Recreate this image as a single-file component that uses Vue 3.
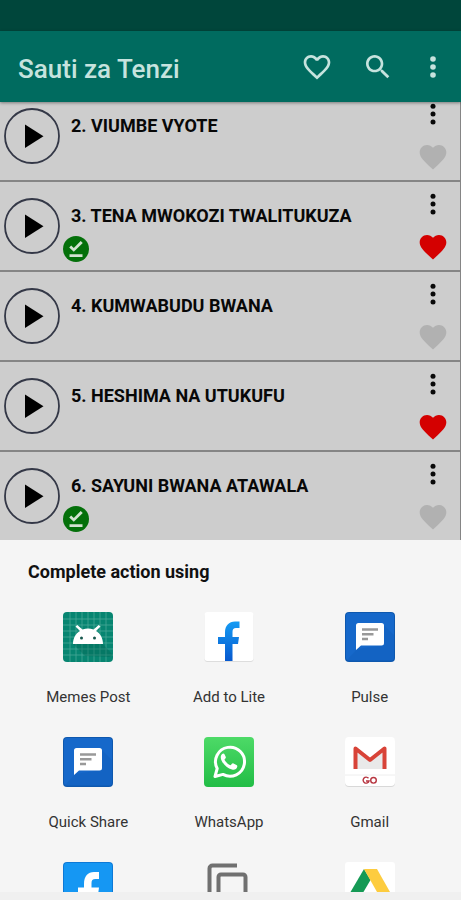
<script setup>
import { ref } from 'vue'

const songs = ref([
  { id: 2, title: '2. VIUMBE VYOTE', saved: false, liked: false },
  { id: 3, title: '3. TENA MWOKOZI TWALITUKUZA', saved: true, liked: true },
  { id: 4, title: '4. KUMWABUDU BWANA', saved: false, liked: false },
  { id: 5, title: '5. HESHIMA NA UTUKUFU', saved: false, liked: true },
  { id: 6, title: '6. SAYUNI BWANA ATAWALA', saved: true, liked: false }
])

const apps = [
  { icon: 'android', name: 'Memes Post' },
  { icon: 'lite', name: 'Add to Lite' },
  { icon: 'message', name: 'Pulse' },
  { icon: 'message', name: 'Quick Share' },
  { icon: 'whatsapp', name: 'WhatsApp' },
  { icon: 'gmail', name: 'Gmail' },
  { icon: 'facebook', name: '' },
  { icon: 'copy', name: '' },
  { icon: 'drive', name: '' }
]
</script>

<template>
  <div class="screen">
    <div class="status"></div>
    <header class="toolbar">
      <h1>Sauti za Tenzi</h1>
      <button class="tool favourites" aria-label="Favourites">
        <svg viewBox="0 0 24 24"><path d="M16.5 3c-1.74 0-3.41.81-4.5 2.09C10.91 3.81 9.24 3 7.5 3 4.42 3 2 5.42 2 8.5c0 3.78 3.4 6.86 8.55 11.54L12 21.35l1.45-1.32C18.6 15.36 22 12.28 22 8.5 22 5.42 19.58 3 16.5 3zm-4.4 15.55l-.1.1-.1-.1C7.14 14.24 4 11.39 4 8.5 4 6.5 5.5 5 7.5 5c1.54 0 3.04.99 3.57 2.36h1.87C13.46 5.99 14.96 5 16.5 5c2 0 3.5 1.5 3.5 3.5 0 2.89-3.14 5.74-7.9 10.05z" /></svg>
      </button>
      <button class="tool" aria-label="Search">
        <svg viewBox="0 0 24 24"><path d="M15.5 14h-.79l-.28-.27C15.41 12.59 16 11.11 16 9.5 16 5.91 13.09 3 9.5 3S3 5.91 3 9.5 5.91 16 9.5 16c1.61 0 3.09-.59 4.23-1.57l.27.28v.79l5 4.99L20.49 19l-4.99-5zm-6 0C7.01 14 5 11.99 5 9.5S7.01 5 9.5 5 14 7.01 14 9.5 11.99 14 9.5 14z" /></svg>
      </button>
      <button class="tool" aria-label="More options">
        <svg viewBox="0 0 24 24"><circle cx="12" cy="6" r="2.1" /><circle cx="12" cy="12" r="2.1" /><circle cx="12" cy="18" r="2.1" /></svg>
      </button>
    </header>

    <main class="list">
      <ul>
        <li v-for="song in songs" :key="song.id" class="song">
          <button class="play" :aria-label="'Play ' + song.title">
            <svg viewBox="0 0 56 56">
              <circle cx="28" cy="28" r="27" fill="none" stroke="#343847" stroke-width="1.8" />
              <path d="M21 16.5V40L39.5 28.2Z" fill="#000" />
            </svg>
          </button>
          <div class="body">
            <span class="title">{{ song.title }}</span>
            <svg v-if="song.saved" class="saved" viewBox="2 2 20 20">
              <circle cx="12" cy="12" r="10" fill="#04700a" />
              <path d="M17 18.2H7v-2.2h10zM10.3 14.2L6.8 10.8l1.5-1.5 2 2 5.3-5.4L17.2 7.3z" fill="#d2e2d0" />
            </svg>
          </div>
          <div class="actions">
            <button class="more" aria-label="Song options">
              <svg viewBox="0 0 24 24"><circle cx="12" cy="5.7" r="2" /><circle cx="12" cy="12" r="2" /><circle cx="12" cy="18.3" r="2" /></svg>
            </button>
            <button class="like" :class="{ liked: song.liked }" aria-label="Favourite" @click="song.liked = !song.liked">
              <svg viewBox="0 0 24 24"><path d="M12 21.35l-1.45-1.32C5.4 15.36 2 12.28 2 8.5 2 5.42 4.42 3 7.5 3c1.74 0 3.41.81 4.5 2.09C13.09 3.81 14.76 3 16.5 3 19.58 3 22 5.42 22 8.5c0 3.78-3.4 6.86-8.55 11.54L12 21.35z" /></svg>
            </button>
          </div>
        </li>
      </ul>
    </main>

    <section class="sheet">
      <h2>Complete action using</h2>
      <div class="apps">
        <button v-for="(app, i) in apps" :key="i" class="app" :aria-label="app.name || app.icon">
          <svg v-if="app.icon === 'android'" viewBox="0 0 50 50">
            <rect width="50" height="50" rx="4" fill="#078571" />
            <path d="M7 0V50M13 0V50M19 0V50M25 0V50M31 0V50M37 0V50M43 0V50M0 7H50M0 13H50M0 19H50M0 25H50M0 31H50M0 37H50M0 43H50" stroke="#48a797" stroke-width="0.8" fill="none" />
            <path d="M10 32L22 44 46 45 50 43 39 31Z" fill="#04604f" opacity="0.35" />
            <path d="M10 32C10 26 13 21 17 19L12.500 14.500l1.800-1.500L19.500 17.500q5.500-2 11 0l5.200-4.500L37.500 14.500 33 19c4 2 7 7 7 13Z" fill="#fff" />
            <circle cx="18.5" cy="26" r="1.5" fill="#17584d" /><circle cx="31.5" cy="26" r="1.5" fill="#17584d" />
          </svg>

          <svg v-else-if="app.icon === 'lite'" viewBox="0 0 50 50">
            <defs><linearGradient id="lite-blue" x1="0" y1="0" x2="0" y2="1"><stop offset="0" stop-color="#159bf3" /><stop offset="1" stop-color="#0759cf" /></linearGradient></defs>
            <rect x="0.5" y="1" width="49" height="49" rx="3" fill="#ddd" />
            <rect x="0.5" y="0" width="49" height="49" rx="3" fill="#fff" />
            <path d="M21 49V32h-7v-7h7v-4.500C21 13.500 25 9.500 31 9.500h4.500V16H32c-2.500 0-3.500 1.500-3.500 4v5H35l-1 7h-5.500V49Z" fill="url(#lite-blue)" />
          </svg>

          <svg v-else-if="app.icon === 'message'" viewBox="0 0 50 50">
            <rect width="50" height="50" rx="4" fill="#0e58ae" />
            <rect x="1" y="1" width="48" height="47.5" rx="3" fill="#1668ca" />
            <path d="M12 37L39 33 39 13 49 23V46a3 3 0 0 1-3 3H1Z" fill="#0f5bb8" opacity="0.35" />
            <path d="M13.500 11H36.500a2.500 2.500 0 0 1 2.500 2.500V31a2.500 2.500 0 0 1-2.500 2.500H16L11 38V13.500A2.500 2.500 0 0 1 13.500 11Z" fill="#fff" />
            <path d="M17 17.500H33M17 22.200H28.500M17 27H23" stroke="#999" stroke-width="2.5" />
          </svg>

          <svg v-else-if="app.icon === 'whatsapp'" viewBox="0 0 50 50">
            <defs><linearGradient id="wa-green" x1="0" y1="0" x2="0" y2="1"><stop offset="0" stop-color="#4dda67" /><stop offset="1" stop-color="#22bd46" /></linearGradient></defs>
            <rect width="50" height="50" rx="4" fill="url(#wa-green)" />
            <path d="M11 39.500L13.200 31.500A14.500 14.500 0 1 1 19 37.400Z" fill="none" stroke="#fff" stroke-width="3" stroke-linejoin="round" />
            <path d="M20.500 17.200c-.5-.9-1.700-.8-2.400-.1-1.500 1.500-1.700 3.600-.8 5.800 2 4.700 6 8.300 10.700 9.600 2.500.7 4.800-.4 5.300-3 .1-.8-.1-1.200-.8-1.600l-3-1.500c-.7-.3-1.100-.2-1.600.4l-1.200 1.500c-2.900-1.100-5-3.100-6.300-5.600l1.100-1.500c.4-.5.4-.9.2-1.400Z" fill="#fff" />
          </svg>

          <svg v-else-if="app.icon === 'gmail'" viewBox="0 0 50 50">
            <rect x="0" y="1" width="50" height="49" rx="4" fill="#d8d8d8" />
            <rect x="0" y="0" width="50" height="49" rx="4" fill="#fff" />
            <path d="M11 13L25 24 39 13V32H11Z" fill="#e9e9e9" />
            <path d="M10.500 32V11.500L25 23 39.500 11.500V32" fill="none" stroke="#d84338" stroke-width="4" stroke-linejoin="round" />
            <path d="M0 38H50" stroke="#eee" />
            <path d="M23.500 41.300a3 3 0 1 0 .5 2.700H21" fill="none" stroke="#b73540" stroke-width="1.4" />
            <circle cx="28.5" cy="43.3" r="2.800" fill="none" stroke="#b73540" stroke-width="1.4" />
          </svg>

          <svg v-else-if="app.icon === 'facebook'" viewBox="0 0 50 50">
            <rect width="50" height="50" rx="4" fill="#0d79d6" />
            <rect x="1" y="1" width="48" height="48" rx="3" fill="#1597f3" />
            <path d="M21 49V33h-6v-7.500h6V22C21 14 25 10 31 10h5v7h-3.500c-3 0-4 1.500-4 4v4.500H36L35 33h-6.500V49Z" fill="#fff" />
          </svg>

          <svg v-else-if="app.icon === 'copy'" viewBox="0 0 50 50">
            <path d="M5.500 34V6.500a3 3 0 0 1 3-3H33" fill="none" stroke="#707070" stroke-width="4" />
            <rect x="14.5" y="12.5" width="27" height="34" rx="2.5" fill="none" stroke="#707070" stroke-width="4" />
          </svg>

          <svg v-else viewBox="0 0 50 50">
            <rect x="0" y="1" width="50" height="49" rx="3" fill="#e2e2e2" />
            <rect width="50" height="49" rx="3" fill="#fff" />
            <path d="M19 7L25.500 18 12 41 5.500 30Z" fill="#159a55" />
            <path d="M19 7H32L45 30H32Z" fill="#fdcc3f" />
            <path d="M12 41L18.500 30H45L38.500 41Z" fill="#4285f4" />
          </svg>
          <span>{{ app.name }}</span>
        </button>
      </div>
      <div class="navbar"></div>
    </section>
  </div>
</template>

<style>
body {
  margin: 0;
}
</style>

<style scoped>
.screen {
  display: flex;
  flex-direction: column;
  height: 100vh;
  overflow: hidden;
  font-family: Roboto, "Liberation Sans", sans-serif;
  background: #cdcdcd;
}

button {
  display: block;
  flex: none;
  padding: 0;
  border: 0;
  background: none;
  font: inherit;
  color: inherit;
  cursor: pointer;
}

svg {
  display: block;
}

.status {
  flex: none;
  height: 31px;
  background: #00463b;
}

.toolbar {
  display: flex;
  flex: none;
  align-items: center;
  gap: 23px;
  height: 71px;
  padding: 0 12px 0 18px;
  background: #006b5f;
  color: #c6e3de;
  box-shadow: 0 1px 3px rgba(0, 0, 0, 0.4);
  z-index: 1;
}

h1 {
  flex: 1;
  margin: 0;
  padding-top: 4px;
  font-size: 26px;
  line-height: 32px;
  font-weight: 500;
  white-space: nowrap;
}

.tool svg {
  width: 32px;
  height: 32px;
  fill: currentColor;
}

.favourites {
  margin-right: 6px;
}

.list {
  flex: 1;
  min-height: 0;
  overflow: hidden;
}

ul {
  margin: -10px 0 0;
  padding: 0;
  list-style: none;
}

.song {
  display: flex;
  box-sizing: border-box;
  height: 90px;
  padding: 0 11px 0 4px;
  border-right: 1px solid #858585;
  border-bottom: 2px solid #858585;
}

.play {
  align-self: flex-start;
  margin-top: 16px;
}

.play svg {
  width: 56px;
  height: 56px;
}

.body {
  flex: 1;
  display: flex;
  flex-direction: column;
  gap: 8px;
  padding: 22px 0 0 3px;
}

.title {
  padding-left: 8px;
  font-size: 18px;
  line-height: 24px;
  font-weight: 700;
  color: #080808;
  white-space: nowrap;
}

.saved {
  width: 26px;
  height: 26px;
}

.actions {
  display: flex;
  flex-direction: column;
  align-items: center;
  gap: 12px;
  padding-top: 7px;
}

.more svg {
  width: 30px;
  height: 30px;
  fill: #080808;
}

.like svg {
  width: 32px;
  height: 32px;
  fill: #b1b1b1;
}

.like.liked svg {
  fill: #d40000;
}

.sheet {
  display: flex;
  flex: none;
  flex-direction: column;
  height: 40vh;
  background: #f5f5f5;
  color: #111;
}

h2 {
  flex: none;
  margin: 0;
  padding: 20px 28px 28px;
  font-size: 18px;
  line-height: 24px;
  font-weight: 700;
}

.apps {
  flex: 1;
  min-height: 0;
  display: grid;
  grid-template-columns: repeat(3, 1fr);
  grid-auto-rows: 125px;
  padding: 0 21px 0 18px;
  overflow: hidden;
}

.app {
  display: flex;
  flex-direction: column;
  align-items: center;
  gap: 25px;
  font-size: 15px;
  line-height: 20px;
  color: #333;
}

.app svg {
  width: 50px;
  height: 50px;
}

.navbar {
  flex: none;
  height: 8px;
  background: #f0f0f0;
}
</style>
